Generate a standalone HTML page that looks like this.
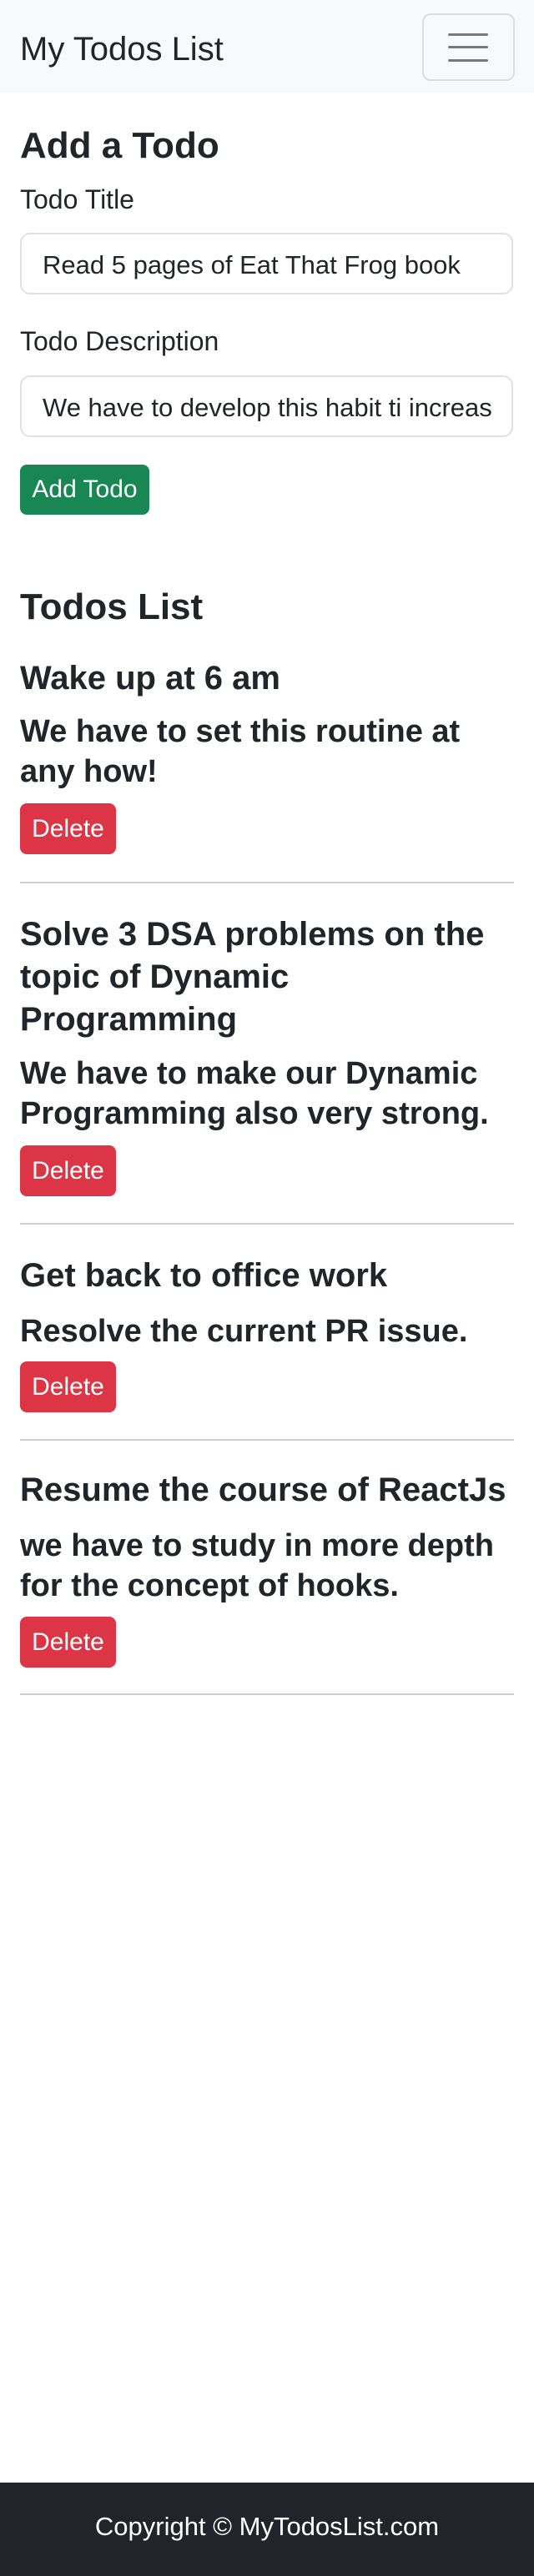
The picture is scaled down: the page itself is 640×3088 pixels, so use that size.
<!DOCTYPE html>
<html><head><meta charset="utf-8">
<style>
html,body{margin:0;padding:0;}
body{width:640px;height:3088px;position:relative;background:#fff;font-family:"Liberation Sans",sans-serif;color:#212529;overflow:hidden;}
.a{position:absolute;white-space:nowrap;}
.nav{position:absolute;left:0;top:0;width:640px;height:111px;background:#f8f9fa;}
.tog{position:absolute;left:506px;top:16px;width:107px;height:77px;border:2px solid #dcdddf;border-radius:10px;}
.tog i{position:absolute;left:29px;width:48px;height:3px;background:#77797b;border-radius:2px;}
.inp{position:absolute;left:24px;width:587px;height:70px;border:2px solid #dee2e6;border-radius:12px;}
.btn{position:absolute;left:24px;color:#fff;border-radius:8px;display:flex;align-items:center;justify-content:center;font-size:30px;}
.del{background:#dc3545;width:115px;height:61px;}
.hr{position:absolute;left:24px;width:592px;height:2px;background:#cfcfcf;}
.t{font-size:40px;line-height:51px;font-weight:700;}
.d{font-size:38px;line-height:48px;font-weight:700;}
</style></head><body>
<div class="nav">
  <div class="a" style="left:24px;top:39px;font-size:40px;line-height:40px;">My Todos List</div>
  <div class="tog"><i style="top:22px"></i><i style="top:37px"></i><i style="top:53px"></i></div>
</div>
<div class="a" style="left:24px;top:153px;font-size:44px;line-height:44px;font-weight:700;">Add a Todo</div>
<div class="a" style="left:24px;top:223px;font-size:32px;line-height:32px;">Todo Title</div>
<div class="inp" style="top:279px;"></div>
<div class="a" style="left:51px;top:302px;font-size:31px;line-height:32px;">Read 5 pages of Eat That Frog book</div>
<div class="a" style="left:24px;top:393px;font-size:32px;line-height:32px;">Todo Description</div>
<div class="inp" style="top:450px;overflow:hidden;"></div>
<div class="a" style="left:51px;top:473px;font-size:31px;line-height:32px;width:540px;overflow:hidden;">We have to develop this habit ti increase</div>
<div class="btn" style="top:557px;width:155px;height:60px;background:#198754;">Add Todo</div>

<div class="a" style="left:24px;top:706px;font-size:44px;line-height:44px;font-weight:700;">Todos List</div>

<div class="a t" style="left:24px;top:788px;">Wake up at 6 am</div>
<div class="a d" style="left:24px;top:853px;">We have to set this routine at<br>any how!</div>
<div class="btn del" style="top:963px;">Delete</div>
<div class="hr" style="top:1057px;"></div>

<div class="a t" style="left:24px;top:1095px;">Solve 3 DSA problems on the<br>topic of Dynamic<br>Programming</div>
<div class="a d" style="left:24px;top:1263px;">We have to make our Dynamic<br>Programming also very strong.</div>
<div class="btn del" style="top:1373px;">Delete</div>
<div class="hr" style="top:1466px;"></div>

<div class="a t" style="left:24px;top:1504px;">Get back to office work</div>
<div class="a d" style="left:24px;top:1572px;">Resolve the current PR issue.</div>
<div class="btn del" style="top:1632px;">Delete</div>
<div class="hr" style="top:1725px;"></div>

<div class="a t" style="left:24px;top:1761px;">Resume the course of ReactJs</div>
<div class="a d" style="left:24px;top:1829px;">we have to study in more depth<br>for the concept of hooks.</div>
<div class="btn del" style="top:1938px;">Delete</div>
<div class="hr" style="top:2030px;"></div>

<div style="position:absolute;left:0;top:2976px;width:640px;height:112px;background:#212529;"></div>
<div class="a" style="left:0;width:640px;text-align:center;top:3013px;font-size:31px;line-height:32px;color:#fff;">Copyright © MyTodosList.com</div>
</body></html>
